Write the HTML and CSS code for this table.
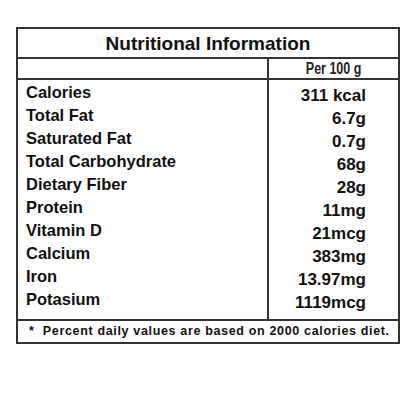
FILE: index.html
```html
<!DOCTYPE html>
<html lang="en">
<head>
  <meta charset="UTF-8">
  <title>Nutritional Information</title>
  <link rel="stylesheet" href="styles.css">
</head>
<body>

  <div class="facts">
    <div class="title">Nutritional Information</div>

    <div class="row head">
      <div class="name"></div>
      <div class="amount"><span class="narrow">Per 100 g</span></div>
    </div>

    <div class="row body">
      <div class="name">
        <div class="line">Calories</div>
        <div class="line">Total Fat</div>
        <div class="line">Saturated Fat</div>
        <div class="line">Total Carbohydrate</div>
        <div class="line">Dietary Fiber</div>
        <div class="line">Protein</div>
        <div class="line">Vitamin D</div>
        <div class="line">Calcium</div>
        <div class="line">Iron</div>
        <div class="line">Potasium</div>
      </div>
      <div class="amount">
        <div class="line">311 kcal</div>
        <div class="line">6.7g</div>
        <div class="line">0.7g</div>
        <div class="line">68g</div>
        <div class="line">28g</div>
        <div class="line">11mg</div>
        <div class="line">21mcg</div>
        <div class="line">383mg</div>
        <div class="line">13.97mg</div>
        <div class="line">1119mcg</div>
      </div>
    </div>

    <div class="note">*&nbsp; Percent daily values are based on 2000 calories diet.</div>
  </div>

</body>
</html>
```

FILE: styles.css
```css
body { margin: 0; background: #fff; font-family: "Liberation Sans", Arial, sans-serif; color: #111; }
.facts { margin: 27px 0 0 16px; width: 380px; border: 2px solid #333; }
.title { height: 28px; line-height: 29px; text-align: center; font-size: 19px; font-weight: bold; border-bottom: 2px solid #333; }
.row { display: flex; }
.row .name { width: 249px; border-right: 2px solid #333; }
.row .amount { flex: 1; }
.head { height: 19px; border-bottom: 2px solid #333; }
.head .amount { text-align: center; font-size: 16px; line-height: 20px; }
.narrow { display: inline-block; transform: scaleX(0.78); font-weight: bold; color: #222; }
.body .name { padding: 1px 0 8px 8px; width: 241px; }
.body .amount { padding: 4px 32px 5px 0; text-align: right; }
.line { height: 23px; line-height: 23px; font-weight: bold; }
.name .line { font-size: 16.5px; }
.amount .line { font-size: 17px; }
.note { border-top: 2px solid #333; height: 21px; line-height: 21px; padding-left: 11px; font-size: 12.5px; letter-spacing: 0.66px; font-weight: bold; }
```
